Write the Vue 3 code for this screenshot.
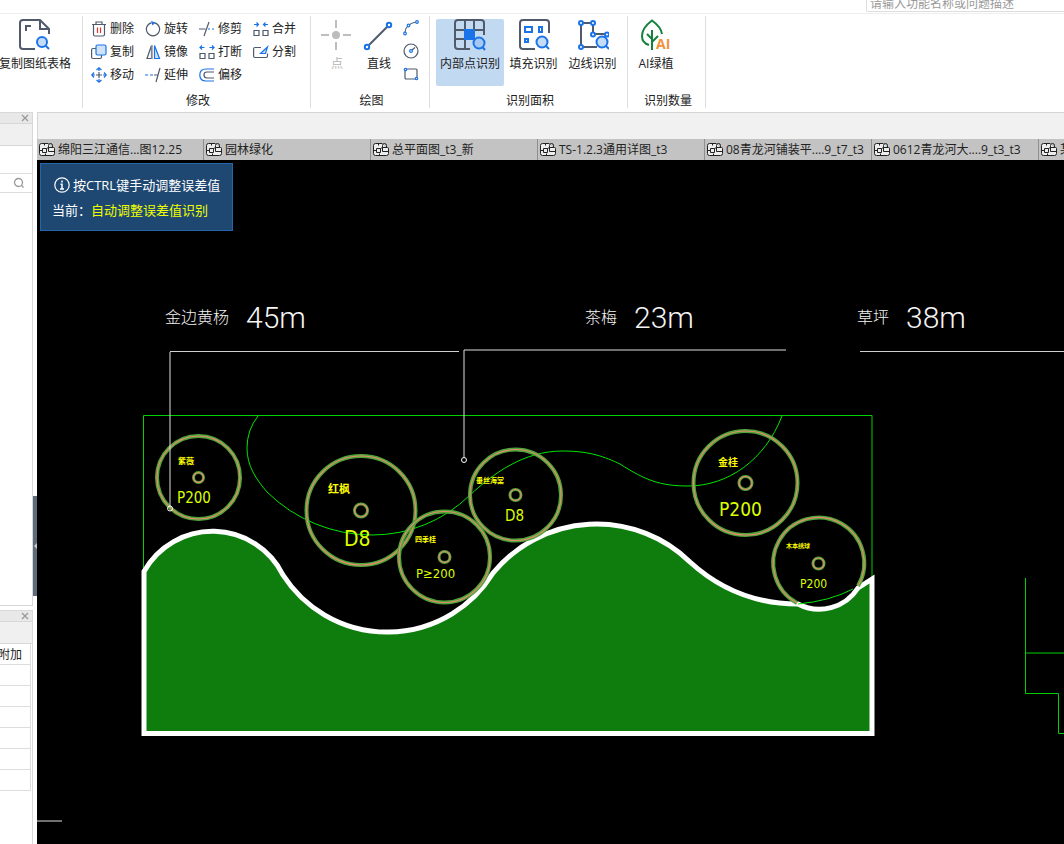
<script setup>
const tabs = [
  '绵阳三江通信...图12.25',
  '园林绿化',
  '总平面图_t3_新',
  'TS-1.2.3通用详图_t3',
  '08青龙河铺装平....9_t7_t3',
  '0612青龙河大....9_t3_t3',
  '某小区景观_t3'
]

const edits = [
  { name: '删除', icon: 'delete' },
  { name: '旋转', icon: 'rotate' },
  { name: '修剪', icon: 'trim' },
  { name: '合并', icon: 'merge' },
  { name: '复制', icon: 'copy' },
  { name: '镜像', icon: 'mirror' },
  { name: '打断', icon: 'break' },
  { name: '分割', icon: 'split' },
  { name: '移动', icon: 'move' },
  { name: '延伸', icon: 'extend' },
  { name: '偏移', icon: 'offset' }
]

const trees = [
  { x: 198.5, y: 477.5, r: 41.5, c: 5, name: '紫薇', nx: 178, ny: 464, ns: 8, spec: 'P200', sx: 177, sy: 503, ss: 15 },
  { x: 361, y: 510.5, r: 54.5, c: 6.5, name: '红枫', nx: 328, ny: 493, ns: 11, spec: 'D8', sx: 344, sy: 546, ss: 21 },
  { x: 444.5, y: 557, r: 45.5, c: 5.5, name: '四季桂', nx: 415, ny: 542, ns: 7, spec: 'P≥200', sx: 416, sy: 578, ss: 13 },
  { x: 515.5, y: 495, r: 45.5, c: 5.5, name: '垂丝海棠', nx: 476, ny: 483, ns: 7, spec: 'D8', sx: 505, sy: 521, ss: 15 },
  { x: 745.5, y: 483, r: 52, c: 6.5, name: '金桂', nx: 718, ny: 466, ns: 10, spec: 'P200', sx: 719, sy: 516, ss: 19 },
  { x: 818.5, y: 563.5, r: 45.5, c: 5.5, name: '木本绣球', nx: 786, ny: 548, ns: 6, spec: 'P200', sx: 800, sy: 588, ss: 12 }
]
</script>

<template>
  <div class="app">
    <header class="topbar">
      <input class="search" type="text" aria-label="功能搜索" placeholder="请输入功能名称或问题描述" />
    </header>

    <nav class="ribbon">
      <section class="group g-sheet">
        <div class="tools">
          <button class="big">
            <svg width="32" height="32" viewBox="0 0 32 32" fill="none" stroke="#505a6b" stroke-width="2">
              <path d="M16 30H4Q1 30 1 27V4Q1 1 4 1H21L30 10V15M21 1V10H30" />
              <path d="M7 12V7H12" />
              <circle cx="23" cy="23" r="5" fill="#c5dcf7" stroke="#1a73e8" />
              <path d="M26.500 26.500L30 30" stroke="#1a73e8" />
            </svg>
            <span>复制图纸表格</span>
          </button>
        </div>
      </section>

      <section class="group g-edit">
        <div class="edit-grid">
          <button v-for="e in edits" :key="e.name" class="small">
            <svg width="16" height="16" viewBox="0 0 16 16" fill="none" stroke="#505a6b" stroke-width="1.200">
              <template v-if="e.icon === 'delete'">
                <path d="M1 3.500H15M5 3.500V1H11V3.500M2.500 3.500V13.500Q2.500 15 4 15H12Q13.500 15 13.500 13.500V3.500" />
                <path d="M6.500 6.500V12M9.500 6.500V12" stroke="#e5302d" />
              </template>
              <template v-else-if="e.icon === 'rotate'">
                <path d="M9.500 1.800A6.600 6.600 0 1 1 6.500 1.800" />
                <path d="M6 0L10.500 1.500L7.500 4.500Z" fill="#1a73e8" stroke="none" />
              </template>
              <template v-else-if="e.icon === 'trim'">
                <path d="M0 8H6.500M10 1L5 15" />
                <path d="M9 8H11M13 8H15" stroke="#1a73e8" />
              </template>
              <template v-else-if="e.icon === 'merge'">
                <path d="M1 9.500H6V14.500H1ZM10 9.500H15V14.500H10Z" />
                <path d="M1 3.500H5M15 3.500H11M3.500 1.500L5.500 3.500L3.500 5.500M12.500 1.500L10.500 3.500L12.500 5.500" stroke="#1a73e8" />
              </template>
              <template v-else-if="e.icon === 'copy'">
                <path d="M5 4.500H2Q.600 4.500 .600 6V13Q.600 14.500 2 14.500H9Q10.500 14.500 10.500 13V11" />
                <rect x="5" y="1" width="10" height="10" rx="1.500" fill="#cfe2f9" stroke="#1a73e8" />
              </template>
              <template v-else-if="e.icon === 'mirror'">
                <path d="M6.500 1.500V14.500H2Z" />
                <path d="M8 1V15H6.500V1Z" fill="#a9b0ba" stroke="none" />
                <path d="M9.500 1.500V14.500H14.500Z" stroke="#1a73e8" fill="#cfe2f9" />
              </template>
              <template v-else-if="e.icon === 'break'">
                <path d="M1 9.500H6V14.500H1ZM10 9.500H15V14.500H10Z" />
                <path d="M1 3.500H5.500M15 3.500H10.500M3 1.500L1 3.500L3 5.500M13 1.500L15 3.500L13 5.500" stroke="#1a73e8" />
              </template>
              <template v-else-if="e.icon === 'split'">
                <path d="M8 3.500H2Q.600 3.500 .600 5V12Q.600 13.500 2 13.500H13Q14.500 13.500 14.500 12V9.500" />
                <path d="M14.500 3L7.500 9.500H12.500Z" stroke="#1a73e8" fill="#cfe2f9" />
              </template>
              <template v-else-if="e.icon === 'move'">
                <path d="M8 5V11M5 8H11" />
                <path d="M8 1V4M8 12V15M1 8H4M12 8H15M5.500 3L8 .800L10.500 3M5.500 13L8 15.200L10.500 13M3 5.500L.800 8L3 10.500M13 5.500L15.200 8L13 10.500" stroke="#1a73e8" />
              </template>
              <template v-else-if="e.icon === 'extend'">
                <path d="M9 8H12.500M15 1L11 15" />
                <path d="M0 8H3M5 8H8" stroke="#1a73e8" />
              </template>
              <template v-else>
                <path d="M15 5H8Q5 5 5 8T8 11H15" />
                <path d="M15 2H7Q.800 2 .800 8T7 14H15" stroke="#1a73e8" />
              </template>
            </svg>
            <span>{{ e.name }}</span>
          </button>
        </div>
        <h2>修改</h2>
      </section>

      <section class="group g-draw">
        <div class="tools">
          <button class="big off" disabled>
            <svg width="32" height="32" viewBox="0 0 32 32" fill="none" stroke="#bdbdbd" stroke-width="2">
              <path d="M15 1V9M15 23V31M0 16H8M22 16H30" />
              <circle cx="15" cy="16" r="4" fill="#bdbdbd" stroke="none" />
            </svg>
            <span>点</span>
          </button>
          <button class="big">
            <svg width="32" height="32" viewBox="0 0 32 32" fill="none" stroke="#505a6b" stroke-width="2">
              <path d="M6 26L25 7" />
              <g stroke="#1a73e8"><circle cx="4" cy="28" r="2.200" /><circle cx="26" cy="6" r="2.200" /></g>
            </svg>
            <span>直线</span>
          </button>
          <div class="mini">
            <button aria-label="圆弧">
              <svg width="16" height="16" viewBox="0 0 16 16" fill="none" stroke="#505a6b" stroke-width="1.200">
                <path d="M2 12Q3 4 13 2" />
                <g stroke="#1a73e8" fill="#fff"><circle cx="2" cy="13.500" r="1.300" /><circle cx="5.500" cy="5.500" r="1.300" /><circle cx="14" cy="2" r="1.300" /></g>
              </svg>
            </button>
            <button aria-label="圆">
              <svg width="16" height="16" viewBox="0 0 16 16" fill="none" stroke="#505a6b" stroke-width="1.200">
                <circle cx="8" cy="8" r="7" /><path d="M9 7L12 4.500" />
                <circle cx="8" cy="8" r="1.400" stroke="#1a73e8" />
              </svg>
            </button>
            <button aria-label="矩形">
              <svg width="16" height="16" viewBox="0 0 16 16" fill="none" stroke="#505a6b" stroke-width="1.200">
                <rect x="2" y="3" width="12" height="10" rx="1" />
                <g stroke="#1a73e8" fill="#fff"><circle cx="2.500" cy="3.500" r="1.200" /><circle cx="13.500" cy="12.500" r="1.200" /></g>
              </svg>
            </button>
          </div>
        </div>
        <h2>绘图</h2>
      </section>

      <section class="group g-area">
        <div class="tools">
          <button class="big wide on">
            <svg width="32" height="32" viewBox="0 0 32 32" fill="none" stroke="#505a6b" stroke-width="2">
              <path d="M16 30H4Q1 30 1 27V4Q1 1 4 1H27Q30 1 30 4V16M1 11H30M1 20H17M11 1V30M20 1V16" />
              <rect x="11" y="11" width="9" height="9" fill="#1a73e8" stroke="#1a73e8" />
              <circle cx="25" cy="24" r="5.500" fill="#a5c8f2" stroke="#1a73e8" />
              <path d="M28.500 28L31 31" stroke="#1a73e8" />
            </svg>
            <span>内部点识别</span>
          </button>
          <button class="big area">
            <svg width="32" height="32" viewBox="0 0 32 32" fill="none" stroke="#505a6b" stroke-width="2">
              <path d="M17 30H5Q2 30 2 27V4Q2 1 5 1H28Q31 1 31 4V14" />
              <g stroke="#1a73e8"><path d="M7 8H14V13H7ZM21 8H24V13H21ZM7 20H10V23H7Z" /><circle cx="24" cy="23" r="5.500" fill="#c5dcf7" /><path d="M28 27L31 30" /></g>
            </svg>
            <span>填充识别</span>
          </button>
          <button class="big area">
            <svg width="32" height="32" viewBox="0 0 32 32" fill="none" stroke="#505a6b" stroke-width="2">
              <path d="M4 4V28H20M4 4H16V15H30" />
              <g stroke="#1a73e8" fill="#fff"><circle cx="4" cy="4" r="2" /><circle cx="16" cy="4" r="2" /><circle cx="4" cy="28" r="2" /><circle cx="16" cy="15.500" r="2" /><circle cx="30" cy="15.500" r="2" /><circle cx="25" cy="23" r="5.500" fill="#c5dcf7" /><path d="M29 27L32 30" /></g>
            </svg>
            <span>边线识别</span>
          </button>
        </div>
        <h2>识别面积</h2>
      </section>

      <section class="group g-count">
        <div class="tools">
          <button class="big wide">
            <svg class="plant" width="32" height="32" viewBox="0 0 32 32" fill="none" stroke="#14813f" stroke-width="2">
              <path d="M9 26Q2 24 2 17Q2 9 12 1.500Q21 8 22 15M12 11V31M12 20L7 15M12 23L18 17" />
              <text x="16" y="30" class="ai">AI</text>
            </svg>
            <span>AI绿植</span>
          </button>
        </div>
        <h2>识别数量</h2>
      </section>
    </nav>

    <div class="body">
      <aside class="side">
        <section class="panel upper">
          <div class="cap">
            <button aria-label="关闭"><svg width="8" height="8" viewBox="0 0 8 8" stroke="#999" stroke-width="1.300"><path d="M1 1L7 7M7 1L1 7" /></svg></button>
          </div>
          <div class="strip"></div>
          <div class="blank"></div>
          <div class="find">
            <button aria-label="查找"><svg width="12" height="12" viewBox="0 0 12 12" fill="none" stroke="#999" stroke-width="1.300"><circle cx="5.500" cy="5.500" r="4" /><path d="M8.500 8.500L10.500 10.500" /></svg></button>
          </div>
        </section>
        <section class="panel lower">
          <div class="cap">
            <button aria-label="关闭"><svg width="8" height="8" viewBox="0 0 8 8" stroke="#999" stroke-width="1.300"><path d="M1 1L7 7M7 1L1 7" /></svg></button>
          </div>
          <div class="strip"></div>
          <table>
            <thead><tr><th>附加</th></tr></thead>
            <tbody><tr v-for="n in 6" :key="n"><td></td></tr></tbody>
          </table>
        </section>
      </aside>

      <div class="gutter">
        <button aria-label="收起面板"><svg width="4" height="8" viewBox="0 0 4 8" fill="#c6cbd2"><path d="M4 1V7L1 4Z" /></svg></button>
      </div>

      <main class="work">
        <div class="spacer"></div>
        <div class="tabs">
          <button v-for="t in tabs" :key="t" class="tab">
            <svg width="16" height="15" viewBox="0 0 16 15" fill="none" stroke="#222">
              <path d="M9.500 1.500H2.500Q.500 1.500 .500 3.500V11.500Q.500 13.500 2.500 13.500H13.500Q15.500 13.500 15.500 11.500V6.500Q15.500 5.500 14.500 5.500H9.500V9.500H15.500" fill="#eee" />
              <path d="M0 8.500H3.500M3.500 6.500H7.500V10.500H3.500ZM7.500 6.500L9.500 5.500M5.500 1.500V3.500M6.500 11.500V13.500M9.500 5.500V3.500Q9.500 1.500 11.500 1.500Q13.500 1.500 13.500 3.500V5.500" />
            </svg>
            <span>{{ t }}</span>
          </button>
        </div>

        <div class="canvas">
          <svg class="drawing" width="100%" height="100%">
            <g transform="translate(-37 -160)" fill="none">
              <g stroke="#00d000">
                <path d="M143.500 571V415.500H872V579" />
                <path d="M1025.500 578V693.500H1058.500V733.500H1400M1025.500 653H1400" />
              </g>
              <path
                d="M144 571.500A78.600 78.600 0 0 1 283 575A124 124 0 0 0 493 573A134 134 0 0 1 690 562Q736 604 798 604A46 46 0 0 0 858 588L872 579V733.500H144Z"
                fill="#0e7d0e" stroke="#fff" stroke-width="5" />
              <path
                d="M258 416Q247 430 247 448C247 466 256 479 267 492A150 150 0 0 0 372 535A140 140 0 0 0 470 495C493 474 523 451 563 451C590 451 605 457 620 464C645 480 660 486 688 486C728 486 765 460 782 416M798 604Q830 601 853 589"
                stroke="#00e600" />
              <g v-for="t in trees" :key="t.x">
                <g stroke="#4da638" stroke-width="4">
                  <path v-if="t.x > 800" d="M797 603A45.500 45.500 0 1 1 858 586" />
                  <circle v-else :cx="t.x" :cy="t.y" :r="t.r" />
                  <circle :cx="t.x" :cy="t.y" :r="t.c" stroke-width="3" />
                </g>
                <g stroke="#e88a70" stroke-width="1.200">
                  <path v-if="t.x > 800" d="M797 603A45.500 45.500 0 1 1 858 586" />
                  <circle v-else :cx="t.x" :cy="t.y" :r="t.r" />
                  <circle :cx="t.x" :cy="t.y" :r="t.c" />
                </g>
                <text class="tree-name" :x="t.nx" :y="t.ny" :font-size="t.ns">{{ t.name }}</text>
                <text class="tree-spec" :x="t.sx" :y="t.sy" :font-size="t.ss">{{ t.spec }}</text>
              </g>
              <g stroke="#fff">
                <path d="M170 506V352M464 457V350M464 350H786M37 821H62" stroke="#e0e0e0" />
                <path d="M170 351.500H459M860 351.500H1400" stroke="#d0d0d0" />
                <circle cx="170" cy="508.500" r="2.500" />
                <circle cx="464" cy="460" r="2.500" />
              </g>
              <g class="note">
                <text class="cn" x="165" y="323">金边黄杨</text><text x="246" y="328">45m</text>
                <text class="cn" x="585" y="323">茶梅</text><text x="634" y="328">23m</text>
                <text class="cn" x="857" y="323">草坪</text><text x="906" y="328">38m</text>
              </g>
            </g>
          </svg>

          <div class="tip" role="status">
            <p>
              <svg width="16" height="16" viewBox="0 0 16 16" fill="none" stroke="#fff" stroke-width="1.200"><circle cx="8" cy="8" r="7.200" /><path d="M8 3.500V5.500M6.500 7.200H8V12M6 12H10" stroke-width="1.500" /></svg>
              <span>按CTRL键手动调整误差值</span>
            </p>
            <p class="mode"><span>当前：</span><em>自动调整误差值识别</em></p>
          </div>
        </div>
      </main>
    </div>
  </div>
</template>

<style>
body {
  margin: 0;
  overflow: hidden;
}
</style>

<style scoped>
.app {
  display: flex;
  flex-direction: column;
  height: 100vh;
  background: #fff;
  color: #222;
  font: 12px/16px "Open Sans", "Noto Sans CJK SC", sans-serif;
}
.app * {
  box-sizing: border-box;
}
button {
  padding: 0;
  border: 0;
  background: none;
  color: inherit;
  font: inherit;
  white-space: nowrap;
}
svg {
  display: block;
  flex: none;
}
.topbar {
  display: flex;
  flex: none;
  justify-content: flex-end;
  align-items: flex-end;
  height: 14px;
  padding-bottom: 1px;
  border-bottom: 1px solid #eee;
  overflow: hidden;
}
.search {
  width: 198px;
  height: 18px;
  padding: 0 3px;
  border: 1px solid #ddd;
  border-right: 0;
  border-radius: 2px 0 0 2px;
  font: inherit;
}
.search::placeholder {
  color: #999;
}
.ribbon {
  display: flex;
  flex: none;
  height: 98px;
  padding: 2px 0 4px;
}
.group {
  display: flex;
  flex-direction: column;
  flex: none;
  border-right: 1px solid #ddd;
}
.group h2 {
  margin: auto 0 -1px;
  padding-left: 3px;
  font: inherit;
  text-align: center;
}
.g-sheet {
  width: 83px;
}
.g-sheet .tools {
  margin-left: -1px;
}
.g-edit {
  width: 228px;
}
.g-draw {
  width: 119px;
}
.g-area {
  width: 198px;
}
.g-count {
  width: 78px;
}
.tools {
  display: flex;
  padding-top: 3px;
}
.big {
  display: flex;
  flex-direction: column;
  align-items: center;
  gap: 5px;
  height: 67px;
  min-width: 42px;
  border-radius: 2px;
}
.g-draw .tools {
  padding-left: 5px;
}
.g-area .tools {
  padding-left: 6px;
}
.wide {
  width: 68px;
}
.g-count .wide {
  width: 56px;
}
.area {
  width: 59px;
}
.on {
  background: #c2d9f2;
}
.off {
  color: #b5b5b5;
}
.plant {
  overflow: visible;
}
.mini {
  display: flex;
  flex-direction: column;
  gap: 7px;
  padding: 1px 0 0 3px;
}
.edit-grid {
  display: grid;
  grid-template-columns: repeat(4, 54px);
  grid-auto-rows: 23px;
  padding: 1px 0 0 8px;
}
.small {
  display: flex;
  align-items: center;
  gap: 3px;
}
.body {
  display: flex;
  flex: 1;
  min-height: 0;
}
.side {
  display: flex;
  flex-direction: column;
  flex: none;
  gap: 4px;
  width: 33px;
}
.panel {
  border: solid #d8d8d8;
  border-width: 1px 1px 1px 0;
}
.upper {
  height: 494px;
}
.lower {
  flex: 1;
  border-bottom: 0;
}
.cap {
  display: flex;
  align-items: center;
  justify-content: flex-end;
  height: 11px;
  padding-right: 3px;
  border-bottom: 1px solid #d8d8d8;
  background: #e8e8e8;
}
.strip {
  height: 22px;
  border-bottom: 1px solid #d8d8d8;
  background: #f0f0f0;
}
.blank {
  height: 28px;
  border-bottom: 1px solid #ddd;
}
.find {
  display: flex;
  align-items: center;
  justify-content: flex-end;
  height: 19px;
  padding-right: 7px;
  border-bottom: 1px solid #ddd;
}
table {
  width: 31px;
  border-collapse: separate;
  border-spacing: 0;
}
th,
td {
  height: 21px;
  padding: 0;
  border: solid #ddd;
  border-width: 0 1px 1px 0;
  font-weight: normal;
  text-align: left;
  text-indent: -2px;
  white-space: nowrap;
}
th {
  padding-top: 2px;
}
.gutter {
  flex: none;
  width: 4px;
  padding-top: 384px;
}
.gutter button {
  display: flex;
  align-items: center;
  width: 4px;
  height: 100px;
  background: #5f6b7a;
}
.work {
  display: flex;
  flex: 1;
  flex-direction: column;
  min-width: 0;
}
.spacer {
  flex: none;
  height: 27px;
  border: solid #d5d5d5;
  border-width: 1px 0 0 1px;
  background: #f1f1f1;
}
.tabs {
  display: flex;
  flex: none;
  height: 21px;
  background: #c3c3c3;
  overflow: hidden;
}
.tab {
  display: flex;
  flex: none;
  align-items: center;
  gap: 3px;
  width: 167px;
  padding-left: 2px;
  border-right: 1px solid #8b9095;
}
.canvas {
  position: relative;
  flex: 1;
  min-height: 0;
  background: #000;
  overflow: hidden;
}
.drawing {
  position: absolute;
  inset: 0;
}
.tip {
  position: absolute;
  top: 3px;
  left: 3px;
  padding: 11px 12px 10px 11px;
  border: 1px solid #2566a8;
  background: #1e4872;
  color: #fff;
  font-size: 13px;
  line-height: 20px;
}
.tip p {
  display: flex;
  align-items: center;
  gap: 3px;
  margin: 0;
  padding-left: 2px;
}
.tip .mode {
  gap: 0;
  padding: 5px 0 0;
}
.tip em {
  color: #f0ff00;
  font-style: normal;
}
.ai {
  fill: #f0933a;
  stroke: none;
  font: bold 14px "Open Sans", sans-serif;
}
.tree-name {
  fill: #ff0;
  font-family: "Noto Sans CJK SC", sans-serif;
  font-weight: bold;
}
.tree-spec {
  fill: #dcff00;
  font-family: "DejaVu Sans Condensed", sans-serif;
}
.note {
  fill: #f4f4f4;
  font: 300 30px "Roboto", "Noto Sans CJK SC", sans-serif;
}
.note .cn {
  font: 300 16px "Noto Sans CJK SC", sans-serif;
}
</style>
